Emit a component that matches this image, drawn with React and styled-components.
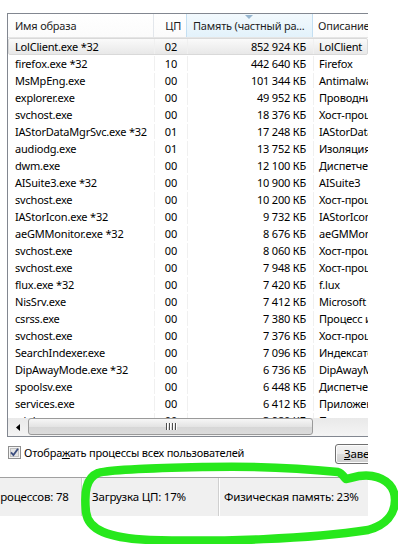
import React from 'react';
import styled, { createGlobalStyle } from 'styled-components';

const Global = createGlobalStyle`
  html, body { margin: 0; padding: 0; background: #ffffff; }
  body {
    width: 398px; height: 544px; overflow: hidden;
    font-family: "Noto Sans", "Open Sans", sans-serif;
    font-size: 11px; letter-spacing: -0.2px; color: #000;
  }
`;

const COLS = '146px 33px 126px 240px';

const Page = styled.div`
  position: relative;
  width: 398px;
  height: 544px;
  padding-top: 13px;
  box-sizing: border-box;
`;

const Window = styled.div`
  width: 368px;
  overflow: hidden;
  display: flex;
  flex-direction: column;
`;

const ListView = styled.div`
  margin-left: 7px;
  height: 424px;
  border: 1px solid #828790;
  border-right: none;
  box-sizing: border-box;
  display: flex;
  flex-direction: column;
  overflow: hidden;
  background: #fff;
`;

const Header = styled.div`
  display: grid;
  grid-template-columns: ${COLS};
  height: 24px;
  box-sizing: border-box;
  border-bottom: 1px solid #e5e5e5;
  background: linear-gradient(#ffffff, #fbfbfb);
  flex-shrink: 0;
`;

const HeadCell = styled.div`
  position: relative;
  line-height: 23px;
  padding: 0 ${p => p.$pr || 0}px 0 ${p => p.$pl || 0}px;
  text-align: ${p => p.$align || 'left'};
  white-space: nowrap;
  overflow: hidden;
  color: #1e1e1e;
  border-right: 1px solid ${p => (p.$sorted ? '#c4dff2' : '#e3e7ec')};
  border-left: ${p => (p.$sorted ? '1px solid #c4dff2' : 'none')};
  margin-left: ${p => (p.$sorted ? '-1px' : '0')};
  background: ${p => (p.$sorted ? 'linear-gradient(#f2f9fd, #e3f2fb)' : 'transparent')};
`;

const SortArrow = styled.span`
  position: absolute;
  top: 1px;
  left: 58px;
  width: 0;
  height: 0;
  border-left: 4px solid transparent;
  border-right: 4px solid transparent;
  border-top: 4px solid #97b6cf;
`;

const Rows = styled.div`
  height: 380px;
  overflow: hidden;
  flex-shrink: 0;
`;

const Row = styled.div`
  display: grid;
  grid-template-columns: ${COLS};
  height: 17px;
  box-sizing: border-box;
  border: 1px solid ${p => (p.$selected ? '#d9d9d9' : 'transparent')};
  border-radius: 2px;
  background: ${p => (p.$selected ? 'linear-gradient(#fafafa, #e8e8e8)' : 'transparent')};
`;

const Cell = styled.div`
  white-space: nowrap;
  overflow: hidden;
  line-height: 16px;
  padding: 0 ${p => p.$pr || 0}px 0 ${p => p.$pl || 0}px;
  text-align: ${p => p.$align || 'left'};
  border-right: 1px solid ${p => (p.$last ? 'transparent' : '#f0f0f0')};
`;

const HScroll = styled.div`
  display: flex;
  height: 18px;
  flex-shrink: 0;
  background: linear-gradient(#e9e9e9, #f4f4f4);
`;

const ArrowBtn = styled.div`
  width: 20px;
  display: flex;
  align-items: center;
  justify-content: center;
  flex-shrink: 0;
`;

const Thumb = styled.div`
  width: 285px;
  margin: 0 0 1px 0;
  box-sizing: border-box;
  border: 1px solid #9a9a9a;
  border-radius: 3px;
  background: linear-gradient(#f6f6f6, #e4e4e4 50%, #d6d6d6 51%, #dcdcdc);
  display: flex;
  align-items: center;
  justify-content: center;
  gap: 2px;
  flex-shrink: 0;
`;

const Grip = styled.span`
  width: 1px;
  height: 7px;
  background: #4d4d4d;
  box-shadow: 1px 0 0 #fff;
`;

const Options = styled.div`
  display: flex;
  align-items: center;
  height: 20px;
  margin-top: 7px;
`;

const CheckLabel = styled.label`
  display: flex;
  align-items: center;
  gap: 3px;
  flex: 0 0 335px;
  padding-left: 8px;
  padding-bottom: 4px;
  box-sizing: border-box;
  white-space: nowrap;
  font-size: 11px;
`;

const Button = styled.div`
  flex: 0 0 130px;
  height: 20px;
  box-sizing: border-box;
  border: 1px solid #707070;
  border-radius: 3px;
  background: linear-gradient(#f2f2f2, #ebebeb 50%, #dddddd 51%, #cfcfcf);
  box-shadow: inset 0 0 0 1px #fcfcfc;
  line-height: 18px;
  padding-left: 8px;
  white-space: nowrap;
  font-size: 11.5px;
`;

const StatusBar = styled.div`
  display: flex;
  margin-top: 13px;
  margin-left: -10px;
  height: 39px;
  border-top: 1px solid #a0a0a0;
  background: #f0f0f0;
  box-sizing: border-box;
  align-items: stretch;
  font-size: 11.5px;
`;

const Pane = styled.div`
  flex: 0 0 ${p => p.$w}px;
  padding-left: ${p => p.$pl}px;
  box-sizing: border-box;
  line-height: 38px;
  white-space: nowrap;
  border-right: ${p => (p.$sep ? '1px solid #d0d0d0' : 'none')};
  box-shadow: ${p => (p.$sep ? '1px 0 0 #ffffff' : 'none')};
`;

const Overlay = styled.svg`
  position: absolute;
  left: 0;
  top: 0;
  pointer-events: none;
`;

const rows = [
  ['LolClient.exe *32', '02', '852 924 КБ', 'LolClient'],
  ['firefox.exe *32', '10', '442 640 КБ', 'Firefox'],
  ['MsMpEng.exe', '00', '101 344 КБ', 'Antimalware Service Executable'],
  ['explorer.exe', '00', '49 952 КБ', 'Проводник'],
  ['svchost.exe', '00', '18 376 КБ', 'Хост-процесс для служб Windows'],
  ['IAStorDataMgrSvc.exe *32', '01', '17 248 КБ', 'IAStorDataMgrSvc'],
  ['audiodg.exe', '01', '13 752 КБ', 'Изоляция графов аудиоустройств'],
  ['dwm.exe', '00', '12 100 КБ', 'Диспетчер окон рабочего стола'],
  ['AISuite3.exe *32', '00', '10 900 КБ', 'AISuite3'],
  ['svchost.exe', '00', '10 200 КБ', 'Хост-процесс для служб Windows'],
  ['IAStorIcon.exe *32', '00', '9 732 КБ', 'IAStorIcon'],
  ['aeGMMonitor.exe *32', '00', '8 676 КБ', 'aeGMMonitor'],
  ['svchost.exe', '00', '8 060 КБ', 'Хост-процесс для служб Windows'],
  ['svchost.exe', '00', '7 948 КБ', 'Хост-процесс для служб Windows'],
  ['flux.exe *32', '00', '7 420 КБ', 'f.lux'],
  ['NisSrv.exe', '00', '7 412 КБ', 'Microsoft Network Realtime Inspection'],
  ['csrss.exe', '00', '7 380 КБ', 'Процесс исполнения клиент-сервер'],
  ['svchost.exe', '00', '7 376 КБ', 'Хост-процесс для служб Windows'],
  ['SearchIndexer.exe', '00', '7 096 КБ', 'Индексатор Microsoft Windows Search'],
  ['DipAwayMode.exe *32', '00', '6 736 КБ', 'DipAwayMode'],
  ['spoolsv.exe', '00', '6 448 КБ', 'Диспетчер очереди печати'],
  ['services.exe', '00', '6 412 КБ', 'Приложение служб и контроллеров'],
  ['winlogon.exe', '00', '3 980 КБ', 'Программа входа в систему Windows'],
];

const CheckBox = () => (
  <svg width="13" height="13" viewBox="0 0 13 13">
    <rect x="0.5" y="0.5" width="12" height="12" fill="#f4f4f4" stroke="#8f8f8f" />
    <rect x="2.5" y="2.5" width="8" height="8" fill="#e4e4e4" stroke="#c0c0c0" />
    <path d="M3 6.3 L5.4 9 L10 2.8" fill="none" stroke="#3b4d7e" strokeWidth="1.8" />
  </svg>
);

export default function App() {
  return (
    <Page>
      <Global />
      <Window>
        <ListView>
          <Header>
            <HeadCell $pl={7}>Имя образа</HeadCell>
            <HeadCell $align="right" $pr={5}>ЦП</HeadCell>
            <HeadCell $sorted $pl={6}>
              <SortArrow />
              Память (частный ра...
            </HeadCell>
            <HeadCell $pl={5}>Описание</HeadCell>
          </Header>
          <Rows>
            {rows.map((r, i) => (
              <Row key={i} $selected={i === 0}>
                <Cell $pl={6}>{r[0]}</Cell>
                <Cell $align="right" $pr={10}>{r[1]}</Cell>
                <Cell $align="right" $pr={7}>{r[2]}</Cell>
                <Cell $pl={5} $last>{r[3]}</Cell>
              </Row>
            ))}
          </Rows>
          <HScroll>
            <ArrowBtn>
              <svg width="4" height="7" viewBox="0 0 4 7">
                <path d="M4 0 L0 3.5 L4 7 Z" fill="#000" />
              </svg>
            </ArrowBtn>
            <Thumb>
              <Grip />
              <Grip />
              <Grip />
              <Grip />
            </Thumb>
          </HScroll>
        </ListView>
        <Options>
          <CheckLabel>
            <CheckBox />
            <span>Отобра<u>ж</u>ать процессы всех пользователей</span>
          </CheckLabel>
          <Button>
            <u>З</u>авершить процесс
          </Button>
        </Options>
        <StatusBar>
          <Pane $w={92} $pl={2} $sep>Процессов: 78</Pane>
          <Pane $w={137} $pl={10} $sep>Загрузка ЦП: 17%</Pane>
          <Pane $w={150} $pl={5}>Физическая память: 23%</Pane>
        </StatusBar>
      </Window>
      <Overlay width="398" height="544" viewBox="0 0 398 544">
        <path
          d="M205 467 C 160 468, 112 469, 98 473 C 86 478, 84 492, 86 512 C 88 530, 108 538, 150 540 C 220 542, 310 539, 368 530 C 386 525, 395 514, 395 500 C 395 488, 388 479, 372 476 C 360 474, 352 478, 346 479 C 343 476, 342 473, 338 472 C 300 468, 250 466, 205 467 Z"
          fill="none"
          stroke="#27e81c"
          strokeWidth="8.5"
          strokeLinejoin="round"
          strokeLinecap="round"
        />
      </Overlay>
    </Page>
  );
}
